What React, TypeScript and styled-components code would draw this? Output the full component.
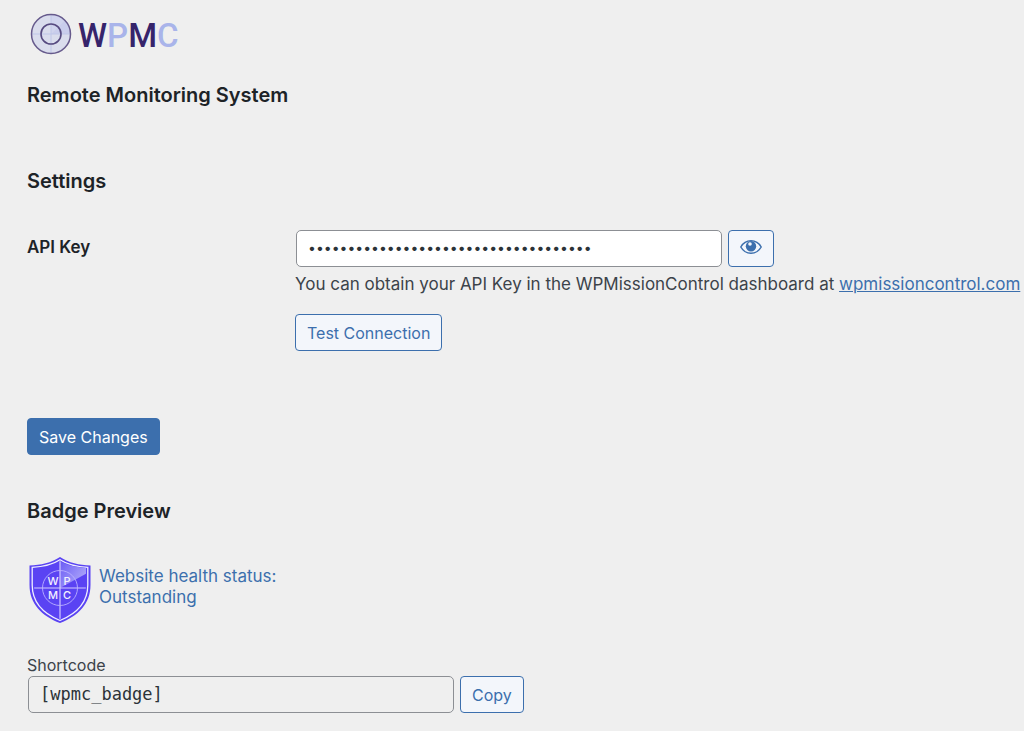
import React, { useState } from "react";
import styled, { createGlobalStyle, css } from "styled-components";

const blue = "#3c6fad";

const GlobalStyle = createGlobalStyle`
  *, *::before, *::after { box-sizing: border-box; }
  body {
    margin: 0;
    background: #efefef;
    color: #3c434a;
    font-family: Inter, "Liberation Sans", sans-serif;
    font-size: 17px;
    line-height: 22px;
  }
`;

const Page = styled.main`
  padding: 12px 0 18px 27px;
`;

const Logo = styled.svg`
  display: block;
  width: 160px;
  height: 44px;
`;

const Heading = styled.h2<{ $top: number }>`
  margin: ${(p) => p.$top}px 0 0;
  color: #1d2327;
  font-size: 20px;
  font-weight: 600;
  line-height: 28px;
`;

const FieldRow = styled.div`
  display: grid;
  grid-template-columns: 268px minmax(0, 1fr);
  margin-top: 35px;
`;

const FieldLabel = styled.label`
  padding-top: 6px;
  color: #1d2327;
  font-weight: 600;
`;

const Controls = styled.div`
  display: flex;
  gap: 6px;
`;

const fieldBox = css`
  width: 426px;
  height: 37px;
  margin: 0 0 0 1px;
  padding: 0 11px 2px;
  border: 1px solid #8c8f94;
  border-radius: 5px;
  color: #2c3338;
  outline: none;
`;

const KeyInput = styled.input`
  ${fieldBox}
  background: #fff;
  font-family: Inter, sans-serif;
  font-size: 14px;
`;

const CodeInput = styled.input`
  ${fieldBox}
  background: #efefef;
  font-family: "DejaVu Sans Mono", monospace;
  font-size: 17px;
`;

const Button = styled.button<{ $primary?: boolean }>`
  display: inline-flex;
  align-items: center;
  justify-content: center;
  height: 37px;
  padding: 0 11px;
  border: 1px solid ${blue};
  border-radius: 4px;
  background: ${(p) => (p.$primary ? blue : "#f3f6fb")};
  color: ${(p) => (p.$primary ? "#fff" : blue)};
  font: inherit;
  font-size: 16px;
  white-space: nowrap;
  cursor: pointer;
`;

const IconButton = styled(Button)`
  width: 46px;
  padding: 0 0 4px;
`;

const Hint = styled.p`
  margin: 6px 0 19px;
`;

const Link = styled.a`
  color: ${blue};
`;

const Actions = styled.div`
  margin-top: 67px;
`;

const Badge = styled.a`
  display: flex;
  align-items: center;
  gap: 8px;
  width: fit-content;
  margin-top: 31px;
  color: ${blue};
  line-height: 21px;
  text-decoration: none;
`;

const BadgeText = styled.span`
  padding-bottom: 6px;
`;

const Shield = styled.svg`
  width: 64px;
  height: 68px;
`;

const Shortcode = styled.div`
  margin-top: 30px;
`;

const CodeLabel = styled.label`
  display: block;
  font-size: 16px;
`;

function WpmcLogo() {
  return (
    <Logo viewBox="0 0 160 44" role="img" aria-label="WPMC">
      <circle cx="24" cy="22" r="19.5" fill="#dadded" />
      <path d="M24 22V3A19 19 0 0 1 38 8Z" fill="#d0d4ee" />
      <path d="M24 22 38 8A19 19 0 0 1 43 22Z" fill="#c9cdec" />
      <path d="M24 3V41M5 22H43" stroke="#bfc6e8" strokeWidth="1" />
      <circle cx="24" cy="22" r="19.5" fill="none" stroke="#665a8c" strokeWidth="1.5" />
      <circle cx="24" cy="22" r="10" fill="none" stroke="#564a80" strokeWidth="1.6" />
      <text x="51" y="35" fontFamily="Roboto, sans-serif" fontSize="33" fontWeight="500" fill="#36246b">
        W<tspan fill="#a9b4ea">P</tspan>M<tspan fill="#a9b4ea">C</tspan>
      </text>
    </Logo>
  );
}

function Eye() {
  return (
    <svg width="22" height="16" viewBox="0 0 22 16" aria-hidden="true">
      <path d="M.8 8C5.500 -.3 16.500 -.3 21.200 8C16.500 16.300 5.500 16.300 .8 8Z" fill="none" stroke={blue} strokeWidth="1.5" />
      <circle cx="11" cy="7.200" r="5.200" fill={blue} />
      <circle cx="10" cy="5" r="1.800" fill="#f3f6fb" />
    </svg>
  );
}

function ShieldBadge() {
  return (
    <Shield viewBox="0 0 64 68" role="img" aria-label="WPMC shield">
      <defs>
        <linearGradient id="sweep" gradientUnits="userSpaceOnUse" x1="33" y1="8" x2="56" y2="24">
          <stop offset="0" stopColor="#6f60f5" />
          <stop offset="1" stopColor="#aaa3f9" />
        </linearGradient>
        <clipPath id="shieldInside">
          <path d="M33 5C25 10 16 11 7 12V30C7 45 17 56 33 63C49 56 59 45 59 30V12C50 11 41 10 33 5Z" />
        </clipPath>
      </defs>
      <path d="M33 1C24 7 14 9 2.500 9.500V29C2.500 48 15 60 33 67C51 60 63.500 48 63.500 29V9.500C52 9 42 7 33 1Z" fill="#5a43f3" />
      <path d="M33 3.800C25 9 15 10.900 5.200 11.300V29C5.200 46 16 57.500 33 64.500C50 57.500 60.800 46 60.800 29V11.300C51 10.900 41 9 33 3.800Z" fill="none" stroke="#efefff" strokeWidth="1.300" />
      <g clipPath="url(#shieldInside)">
        <path d="M33 32V3L62 5V16Z" fill="url(#sweep)" />
        <path d="M33 3V65M5 32H61" stroke="#d2ccff" strokeWidth="1.200" />
      </g>
      <circle cx="33" cy="32" r="17.500" fill="none" stroke="#bab1ff" strokeWidth=".9" />
      <g fontFamily="Inter, sans-serif" fontSize="11" fontWeight="500" fill="#f2f0ff" textAnchor="middle">
        <text x="26" y="29">W</text>
        <text x="40" y="29">P</text>
        <text x="26" y="43">M</text>
        <text x="40" y="43">C</text>
      </g>
    </Shield>
  );
}

export default function App() {
  const [apiKey, setApiKey] = useState("a".repeat(36));
  const [visible, setVisible] = useState(false);
  const shortcode = "[wpmc_badge]";

  return (
    <>
      <GlobalStyle />
      <Page>
        <WpmcLogo />
        <Heading $top={25}>Remote Monitoring System</Heading>
        <form onSubmit={(e) => e.preventDefault()}>
          <Heading $top={58}>Settings</Heading>
          <FieldRow>
            <FieldLabel htmlFor="api-key">API Key</FieldLabel>
            <div>
              <Controls>
                <KeyInput
                  id="api-key"
                  type={visible ? "text" : "password"}
                  value={apiKey}
                  onChange={(e) => setApiKey(e.target.value)}
                />
                <IconButton type="button" aria-label="Show API key" onClick={() => setVisible(!visible)}>
                  <Eye />
                </IconButton>
              </Controls>
              <Hint>
                You can obtain your API Key in the WPMissionControl dashboard at{" "}
                <Link href="#dashboard">wpmissioncontrol.com</Link>
              </Hint>
              <Button type="button">Test Connection</Button>
            </div>
          </FieldRow>
          <Actions>
            <Button type="submit" $primary>Save Changes</Button>
          </Actions>
        </form>
        <Heading $top={42}>Badge Preview</Heading>
        <Badge href="#status">
          <ShieldBadge />
          <BadgeText>
            Website health status:
            <br />
            Outstanding
          </BadgeText>
        </Badge>
        <Shortcode>
          <CodeLabel htmlFor="shortcode">Shortcode</CodeLabel>
          <Controls>
            <CodeInput id="shortcode" type="text" readOnly value={shortcode} />
            <Button type="button" onClick={() => navigator.clipboard?.writeText(shortcode)}>Copy</Button>
          </Controls>
        </Shortcode>
      </Page>
    </>
  );
}
